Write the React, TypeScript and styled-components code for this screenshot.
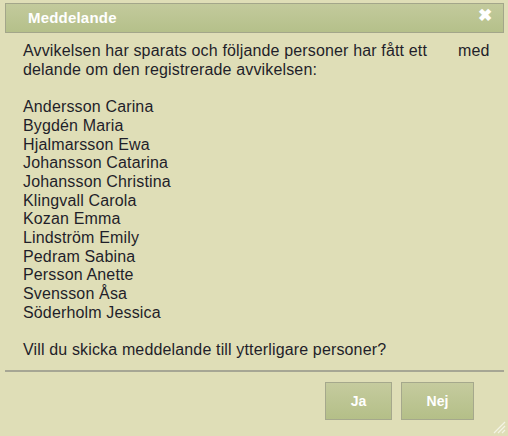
import React from 'react';
import styled, { createGlobalStyle } from 'styled-components';

const recipients = [
  'Andersson Carina',
  'Bygdén Maria',
  'Hjalmarsson Ewa',
  'Johansson Catarina',
  'Johansson Christina',
  'Klingvall Carola',
  'Kozan Emma',
  'Lindström Emily',
  'Pedram Sabina',
  'Persson Anette',
  'Svensson Åsa',
  'Söderholm Jessica',
];

const App: React.FC = () => {
  return (
    <>
      <GlobalStyle />
      <Dialog>
        <TitleBar>
          <Title>Meddelande</Title>
          <CloseButton aria-label="Stäng">✖</CloseButton>
        </TitleBar>
        <Body>
          <Paragraph>
            Avvikelsen har sparats och följande personer har fått ett<Gap />med
            <br />
            delande om den registrerade avvikelsen:
          </Paragraph>
          <NameList>
            {recipients.map((name) => (
              <li key={name}>{name}</li>
            ))}
          </NameList>
          <Paragraph>Vill du skicka meddelande till ytterligare personer?</Paragraph>
        </Body>
        <ButtonPane>
          <ActionButton $width={67}>Ja</ActionButton>
          <ActionButton $width={73}>Nej</ActionButton>
        </ButtonPane>
        <ResizeGrip width="14" height="14" viewBox="0 0 14 14">
          <g stroke="#f4f4e4" strokeWidth="1.3">
            <line x1="13" y1="2" x2="2" y2="13" />
            <line x1="13" y1="6" x2="6" y2="13" />
            <line x1="13" y1="10" x2="10" y2="13" />
          </g>
        </ResizeGrip>
      </Dialog>
    </>
  );
};

// Styled Components
const GlobalStyle = createGlobalStyle`
  html, body {
    margin: 0;
    padding: 0;
    background-color: #dfdeb7;
  }
`;

const Dialog = styled.div`
  position: relative;
  width: 508px;
  height: 436px;
  box-sizing: border-box;
  padding: 3px 4px 0 5px;
  background-color: #dfdeb7;
  font-family: 'Liberation Sans', Arial, sans-serif;
  display: flex;
  flex-direction: column;
`;

const TitleBar = styled.div`
  height: 30px;
  box-sizing: border-box;
  border: 1px solid #a3a68a;
  background: linear-gradient(to bottom, #c3ca9c, #b5c08a);
  display: flex;
  align-items: center;
  justify-content: space-between;
  padding: 0 11px 1px 22px;
`;

const Title = styled.span`
  color: #ffffff;
  font-weight: bold;
  font-size: 15px;
  letter-spacing: 0.2px;
`;

const CloseButton = styled.span`
  color: #ffffff;
  font-size: 17px;
  font-weight: bold;
  line-height: 1;
  margin-top: -5px;
`;

const Body = styled.div`
  padding: 9px 6px 0 18px;
  color: #1f1f2a;
  font-size: 16px;
  line-height: 18.7px;
  letter-spacing: 0.15px;
  height: 339px;
  box-sizing: border-box;
  border-bottom: 2px solid #a6a694;
`;

const Paragraph = styled.p`
  margin: 0;
  white-space: nowrap;
`;

const Gap = styled.span`
  display: inline-block;
  width: 31px;
`;

const NameList = styled.ul`
  list-style: none;
  margin: 18.7px 0;
  padding: 0;
`;

const ButtonPane = styled.div`
  display: flex;
  justify-content: flex-end;
  gap: 9px;
  padding: 10px 30px 0 0;
`;

const ActionButton = styled.button<{ $width: number }>`
  width: ${(p) => p.$width}px;
  height: 38px;
  border: 1px solid #a5a88c;
  background: linear-gradient(to bottom, #c5cb9e, #b4bf88);
  color: #ffffff;
  font-family: 'Liberation Sans', Arial, sans-serif;
  font-weight: bold;
  font-size: 14px;
  padding: 0;
  cursor: pointer;
`;

const ResizeGrip = styled.svg`
  position: absolute;
  right: 2px;
  bottom: 2px;
`;

export default App;
